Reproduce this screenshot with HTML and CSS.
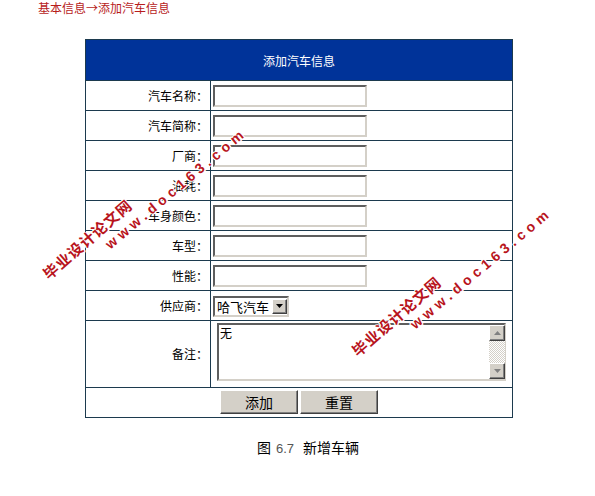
FILE: index.html
```html
<!DOCTYPE html>
<html lang="zh-CN">
<head>
<meta charset="utf-8">
<title>添加汽车信息</title>
<link rel="stylesheet" href="styles.css">
</head>
<body>
<div class="crumb">基本信息→添加汽车信息</div>
<form class="wrap">
  <table class="form">
    <colgroup><col class="c-lbl"><col class="c-fld"></colgroup>
    <tr><th colspan="2" class="head">添加汽车信息</th></tr>
    <tr><td class="lbl">汽车名称：</td><td class="fld"><input class="txt" type="text"></td></tr>
    <tr><td class="lbl">汽车简称：</td><td class="fld"><input class="txt" type="text"></td></tr>
    <tr><td class="lbl">厂商：</td><td class="fld"><input class="txt" type="text"></td></tr>
    <tr><td class="lbl">油耗：</td><td class="fld"><input class="txt" type="text"></td></tr>
    <tr><td class="lbl">车身颜色：</td><td class="fld"><input class="txt" type="text"></td></tr>
    <tr><td class="lbl">车型：</td><td class="fld"><input class="txt" type="text"></td></tr>
    <tr><td class="lbl">性能：</td><td class="fld"><input class="txt" type="text"></td></tr>
    <tr><td class="lbl">供应商：</td><td class="fld">
      <span class="sel">
        <select class="sel-box"><option>哈飞汽车</option></select>
        <span class="sel-btn"><svg width="7" height="4" viewBox="0 0 7 4"><polygon points="0,0 7,0 3.5,4" fill="#000"/></svg></span>
      </span>
    </td></tr>
    <tr class="memo-row"><td class="lbl">备注：</td><td class="fld memo">
      <span class="memo-box">
        <textarea class="area">无</textarea>
        <span class="sb">
          <span class="sb-btn"><svg width="7" height="4" viewBox="0 0 7 4"><polygon points="3.5,0 7,4 0,4" fill="#808080"/></svg></span>
          <span class="sb-track"></span>
          <span class="sb-btn"><svg width="7" height="4" viewBox="0 0 7 4"><polygon points="0,0 7,0 3.5,4" fill="#808080"/></svg></span>
        </span>
      </span>
    </td></tr>
    <tr class="btn-row"><td colspan="2" class="btns"><button type="button" class="btn">添加</button><button type="button" class="btn">重置</button></td></tr>
  </table>
</form>
<p class="caption"><span class="cap-fig">图</span><span class="cap-num">6.7</span><span class="cap-txt">新增车辆</span></p>

<div class="wm wm-cn wm-cn-1">毕业设计论文网</div>
<div class="wm wm-en wm-en-1">www.doc163.com</div>
<div class="wm wm-cn wm-cn-2">毕业设计论文网</div>
<div class="wm wm-en wm-en-2">www.doc163.com</div>
</body>
</html>
```
FILE: styles.css
```css
* { box-sizing: border-box; }

body {
  margin: 0;
  background: #fff;
  font-family: "Noto Sans CJK SC", "Liberation Sans", sans-serif;
  font-size: 12px;
  color: #000;
  position: relative;
  width: 595px;
  height: 496px;
  overflow: hidden;
}

.crumb {
  padding: 0 0 0 38px;
  height: 14px;
  line-height: 15px;
  color: #b71c1c;
  font-size: 12px;
}

.wrap {
  margin: 25px 0 0 85px;
}

.form {
  width: 428px;
  border-collapse: separate;
  border-spacing: 1px;
  background: #1c3a4e;
  table-layout: fixed;
}

.c-lbl { width: 124px; }
.c-fld { width: auto; }

.form td, .form th {
  padding: 0;
  background: #fff;
  font-weight: normal;
}

.head {
  height: 40px;
  background: #003399 !important;
  color: #fff;
  text-align: center;
  font-size: 12px;
  line-height: 14px;
  padding-top: 1px !important;
}

.lbl {
  height: 29px;
  text-align: right;
  padding-right: 2px !important;
  line-height: 14px;
}

.fld {
  height: 29px;
  padding-left: 2px !important;
  line-height: 0;
}

.txt {
  width: 154px;
  height: 22px;
  margin: 0;
  padding: 0 2px;
  border: 2px solid;
  border-color: #5e5e5e #d4d0c8 #d4d0c8 #5e5e5e;
  background: #fff;
  font-family: "Noto Sans CJK SC", sans-serif;
  font-size: 12px;
  vertical-align: middle;
}

.sel {
  position: relative;
  display: inline-block;
  width: 76px;
  height: 21px;
  vertical-align: middle;
  margin-top: 1px;
}

.sel-box {
  appearance: none;
  -webkit-appearance: none;
  width: 76px;
  height: 21px;
  margin: 0;
  padding: 0 0 0 2px;
  border: 2px solid;
  border-color: #5e5e5e #d4d0c8 #d4d0c8 #5e5e5e;
  background: #fff;
  font-family: "Noto Sans CJK SC", sans-serif;
  font-size: 13px;
  line-height: 17px;
  color: #000;
}

.sel-btn {
  position: absolute;
  right: 2px;
  top: 3px;
  width: 15px;
  height: 15px;
  background: #d4d0c8;
  border: 1px solid;
  border-color: #fff #404040 #404040 #fff;
  box-shadow: inset -1px -1px 0 #808080;
  display: flex;
  align-items: center;
  justify-content: center;
}

.memo {
  height: 66px;
  vertical-align: top;
  padding-left: 6px !important;
  padding-top: 2px !important;
}

.memo-box {
  position: relative;
  display: inline-block;
  width: 289px;
  height: 58px;
}

.area {
  display: block;
  width: 289px;
  height: 58px;
  margin: 0;
  padding: 0 18px 0 1px;
  border: 2px solid;
  border-color: #5e5e5e #d4d0c8 #d4d0c8 #5e5e5e;
  resize: none;
  overflow: hidden;
  font-family: "Noto Sans CJK SC", sans-serif;
  font-size: 12px;
  line-height: 15px;
  background: #fff;
}

.sb {
  position: absolute;
  right: 1px;
  top: 2px;
  bottom: 2px;
  width: 16px;
  display: flex;
  flex-direction: column;
}

.sb-btn {
  height: 16px;
  flex: none;
  background: #d4d0c8;
  border: 1px solid;
  border-color: #fff #404040 #404040 #fff;
  box-shadow: inset -1px -1px 0 #808080;
  display: flex;
  align-items: center;
  justify-content: center;
}

.sb-track {
  flex: 1;
  background: repeating-conic-gradient(#fff 0 25%, #d4d0c8 0 50%) 0 0 / 2px 2px;
}

.btns {
  height: 29px;
  text-align: center;
  vertical-align: top;
  padding-top: 2px !important;
}

.btn {
  width: 78px;
  height: 24px;
  margin: 0 1px;
  padding: 0;
  background: #d4d0c8;
  border: 1px solid;
  border-color: #fff #404040 #404040 #fff;
  box-shadow: inset -1px -1px 0 #808080;
  font-family: "Noto Sans CJK SC", sans-serif;
  font-size: 14px;
  line-height: 20px;
  color: #000;
  vertical-align: top;
}

.caption {
  margin: 21px 0 0 257px;
  height: 16px;
  line-height: 16px;
  font-size: 14px;
  white-space: nowrap;
}

.cap-num {
  font-family: "Liberation Sans", sans-serif;
  font-size: 13px;
  color: #555;
  margin: 0 9px 0 5px;
}

.wm {
  position: absolute;
  white-space: nowrap;
  color: #b8141c;
  font-weight: bold;
  transform-origin: 0 50%;
  text-shadow: 1px 0 #fff, -1px 0 #fff, 0 1px #fff, 0 -1px #fff, 1px 1px #fff, -1px -1px #fff;
}

.wm-cn {
  font-family: "Noto Sans CJK SC", sans-serif;
  font-size: 15px;
  line-height: 16px;
  letter-spacing: 1px;
  transform: rotate(-41deg);
}

.wm-en {
  font-family: "Liberation Sans", sans-serif;
  font-size: 14px;
  line-height: 14px;
  letter-spacing: 4.5px;
  transform: rotate(-40deg);
}

.wm-cn-1 { left: 45px; top: 268px; }
.wm-en-1 { left: 107px; top: 239px; }
.wm-cn-2 { left: 354px; top: 345px; }
.wm-en-2 { left: 412px; top: 319px; }
```
